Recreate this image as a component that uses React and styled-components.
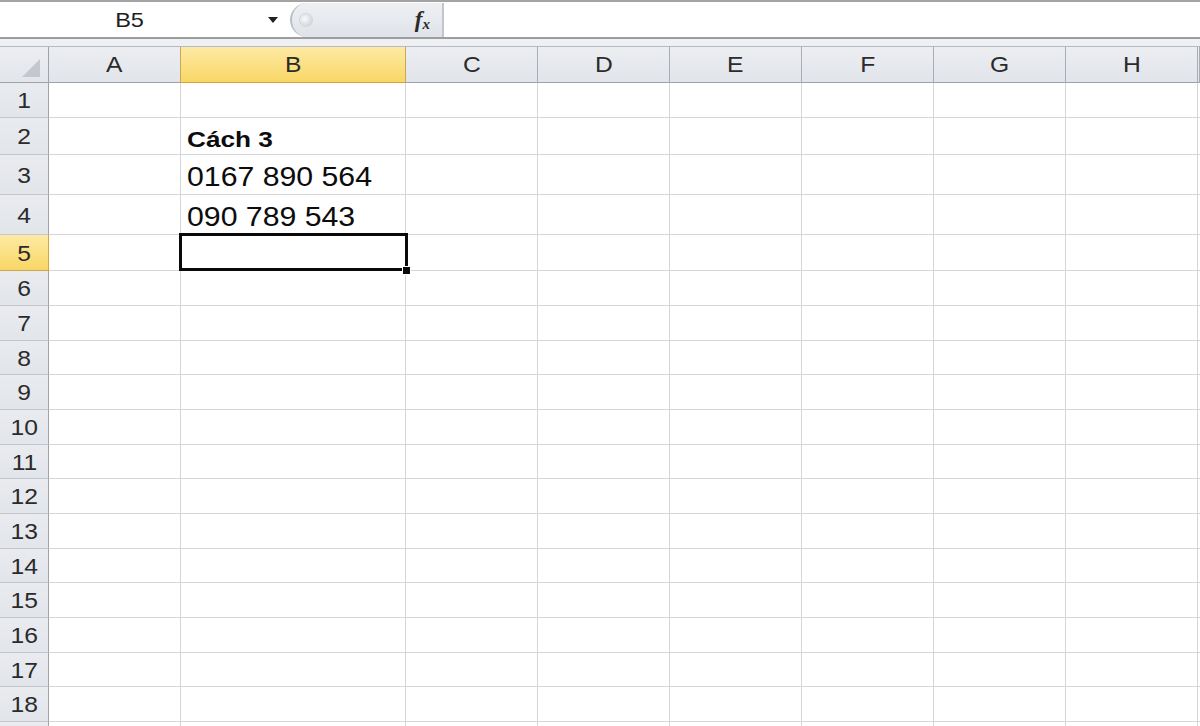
import styled, { createGlobalStyle } from "styled-components";

const GlobalStyle = createGlobalStyle`
  html, body {
    margin: 0;
    padding: 0;
    background: #ffffff;
    overflow: hidden;
  }
  body {
    font-family: "Liberation Sans", Arial, sans-serif;
  }
`;

const COLS = ["A", "B", "C", "D", "E", "F", "G", "H", ""];
const TEMPLATE = "49px 132px 225px repeat(6, 132px) 1fr";

const ROW_HEIGHTS = [35, 37, 40, 40, 36, 35, 35, 34, 35, 35, 34, 35, 35, 34, 35, 35, 34, 35, 35];

const CELLS = {
  "2-B": { text: "Cách 3", bold: true, size: 22, sx: 1.19 },
  "3-B": { text: "0167 890 564", size: 28, sx: 1.08 },
  "4-B": { text: "090 789 543", size: 28, sx: 1.08 },
};

function App() {
  return (
    <Page>
      <GlobalStyle />
      <FormulaBar>
        <NameBox>
          <NameText>B5</NameText>
          <DropArrow />
        </NameBox>
        <FxPill>
          <Knob />
          <FxLabel>
            <i>f</i>
            <sub>x</sub>
          </FxLabel>
        </FxPill>
        <FormulaInput />
      </FormulaBar>
      <Spacer />
      <HeaderRow>
        <Corner>
          <svg width="20" height="20" viewBox="0 0 20 20">
            <polygon points="19,1 19,19 1,19" fill="#c4c8ce" />
          </svg>
        </Corner>
        {COLS.map((c) => (
          <ColHead key={c || "I"} $active={c === "B"}>
            <HeadText>{c}</HeadText>
          </ColHead>
        ))}
      </HeaderRow>
      {ROW_HEIGHTS.map((h, i) => {
        const n = i + 1;
        return (
          <Row key={n} $h={h}>
            <RowHead $active={n === 5}>
              {n <= 18 && <HeadText>{n}</HeadText>}
            </RowHead>
            {COLS.map((c) => {
              const cell = CELLS[`${n}-${c}`];
              return (
                <Cell key={c || "I"} $selected={n === 5 && c === "B"}>
                  {cell && (
                    <CellText $bold={cell.bold} $size={cell.size} $sx={cell.sx}>
                      {cell.text}
                    </CellText>
                  )}
                </Cell>
              );
            })}
          </Row>
        );
      })}
    </Page>
  );
}

export default App;

const Page = styled.div`
  width: 1200px;
  height: 726px;
  overflow: hidden;
  background: #fff;
`;

const FormulaBar = styled.div`
  height: 35px;
  display: flex;
  align-items: stretch;
  border-top: 2px solid #a3a3a3;
  border-bottom: 2px solid #9d9d9d;
  background: #fff;
`;

const NameBox = styled.div`
  width: 290px;
  display: flex;
  align-items: center;
`;

const NameText = styled.span`
  flex: 1;
  text-align: center;
  font-size: 21px;
  color: #1e1e1e;
  transform: scaleX(1.12);
  padding-right: 8px;
`;

const DropArrow = styled.span`
  width: 0;
  height: 0;
  margin-right: 12px;
  border-left: 5px solid transparent;
  border-right: 5px solid transparent;
  border-top: 6px solid #222;
`;

const FxPill = styled.div`
  width: 154px;
  margin-top: 1px;
  display: flex;
  align-items: center;
  justify-content: space-between;
  padding: 0 12px 0 8px;
  box-sizing: border-box;
  background: linear-gradient(#eef0f3, #dfe3e9);
  border-left: 2px solid #b9bec6;
  border-right: 2px solid #c2c6cc;
  border-top-left-radius: 18px;
  border-bottom-left-radius: 18px;
`;

const Knob = styled.span`
  width: 12px;
  height: 12px;
  border-radius: 50%;
  background: radial-gradient(circle at 40% 40%, #fafbfc, #c5cad1);
  box-shadow: 0 0 0 1px #d2d6dc;
`;

const FxLabel = styled.span`
  font-family: "Liberation Serif", "Times New Roman", serif;
  font-weight: bold;
  font-size: 23px;
  color: #2a2a2a;
  line-height: 1;

  i {
    font-style: italic;
  }
  sub {
    font-style: italic;
    font-size: 15px;
    vertical-align: -2px;
  }
`;

const FormulaInput = styled.div`
  flex: 1;
  background: #fff;
`;

const Spacer = styled.div`
  height: 7px;
  background: #eef0f3;
  border-bottom: 1px solid #b4bac3;
`;

const HeaderRow = styled.div`
  display: grid;
  grid-template-columns: ${TEMPLATE};
  height: 36px;
`;

const Corner = styled.div`
  box-sizing: border-box;
  background: linear-gradient(#eceef2, #e2e5ea);
  border-right: 1px solid #9ea3ab;
  border-bottom: 1px solid #9ea3ab;
  display: flex;
  align-items: flex-end;
  justify-content: flex-end;
  padding: 0 7px 4px 0;
`;

const ColHead = styled.div`
  box-sizing: border-box;
  display: flex;
  align-items: center;
  justify-content: center;
  background: ${(p) =>
    p.$active
      ? "linear-gradient(#fde9a4, #f9d766)"
      : "linear-gradient(#eceef2, #e1e4e9)"};
  border-right: 1px solid ${(p) => (p.$active ? "#c9a852" : "#a9aeb6")};
  border-bottom: 1px solid ${(p) => (p.$active ? "#d9a23a" : "#9ea3ab")};
  margin-left: ${(p) => (p.$active ? "-1px" : "0")};
  border-left: ${(p) => (p.$active ? "1px solid #c9a852" : "none")};
`;

const HeadText = styled.span`
  display: inline-block;
  font-size: 22px;
  color: #2b2b2b;
  transform: scaleX(1.12);
`;

const Row = styled.div`
  display: grid;
  grid-template-columns: ${TEMPLATE};
  height: ${(p) => p.$h}px;
`;

const RowHead = styled.div`
  box-sizing: border-box;
  display: flex;
  align-items: center;
  justify-content: center;
  padding-top: 2px;
  background: ${(p) =>
    p.$active
      ? "linear-gradient(#fde9a4, #f9d766)"
      : "linear-gradient(#e9ebef, #e2e5ea)"};
  border-right: 1px solid ${(p) => (p.$active ? "#d9a23a" : "#9ea3ab")};
  border-bottom: 1px solid ${(p) => (p.$active ? "#c9a852" : "#c3c7cd")};
`;

const Cell = styled.div`
  box-sizing: border-box;
  position: relative;
  display: flex;
  align-items: flex-end;
  padding: 0 0 3px 6px;
  border-right: 1px solid #d6d6d6;
  border-bottom: 1px solid #d6d6d6;
  white-space: nowrap;

  ${(p) =>
    p.$selected &&
    `
    &::after {
      content: "";
      position: absolute;
      left: -2px;
      top: -2px;
      right: -3px;
      bottom: -1px;
      border: 3px solid #0a0a0a;
      z-index: 2;
    }
    &::before {
      content: "";
      position: absolute;
      right: -6px;
      bottom: -5px;
      width: 7px;
      height: 7px;
      background: #0a0a0a;
      border: 1px solid #fff;
      z-index: 3;
    }
  `}
`;

const CellText = styled.span`
  display: inline-block;
  font-size: ${(p) => p.$size}px;
  font-weight: ${(p) => (p.$bold ? "bold" : "normal")};
  color: #0c0c0c;
  line-height: 1;
  transform: scaleX(${(p) => p.$sx});
  transform-origin: left bottom;
`;
